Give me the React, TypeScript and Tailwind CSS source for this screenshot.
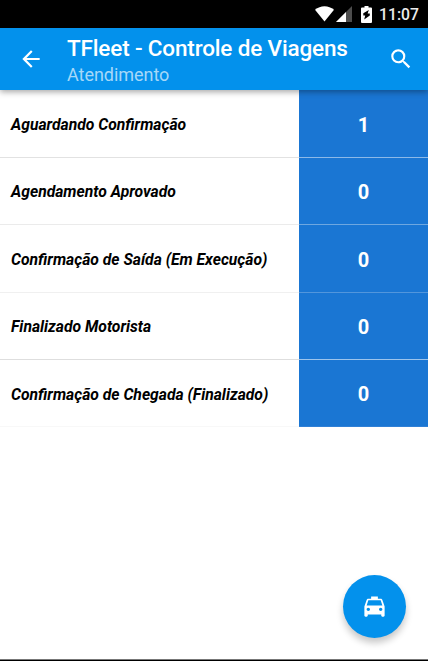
import { MdArrowBack, MdLocalTaxi, MdSearch } from "react-icons/md";

type Row = { label: string; count: number; height: string; pad: string; line: string; countLine: string };

const rows: Row[] = [
  { label: "Aguardando Confirmação", count: 1, height: "h-[68px]", pad: "pt-[3px]", line: "border-[#e2e2e2]", countLine: "border-[#8cb9e8]" },
  { label: "Agendamento Aprovado", count: 0, height: "h-[67px]", pad: "pt-[2px]", line: "border-[#ebebeb]", countLine: "border-[#6ea7e0]" },
  { label: "Confirmação de Saída (Em Execução)", count: 0, height: "h-[68px]", pad: "pt-[3px]", line: "border-[#f0f0f0]", countLine: "border-[#5296dc]" },
  { label: "Finalizado Motorista", count: 0, height: "h-[67px]", pad: "pt-[2px]", line: "border-[#dedede]", countLine: "border-[#9dc4ec]" },
  { label: "Confirmação de Chegada (Finalizado)", count: 0, height: "h-[67px]", pad: "pt-[3px]", line: "border-[#f8f8f8]", countLine: "border-[#3080d6]" },
];

function StatusBar() {
  return (
    <div className="flex h-7 shrink-0 items-center bg-black pr-[9px] pl-[315px] text-white">
      <svg className="h-[16px] w-[19px] shrink-0" viewBox="0 0 19 16">
        <path d="M0 3.8C5.4-1.1 13.6-1.1 19 3.8L9.5 15.6Z" fill="#fff" />
      </svg>
      <svg className="ml-[2px] h-[16px] w-4 shrink-0" viewBox="0 0 16 16">
        <path d="M16 0V16H0Z" fill="#4d4d4d" />
        <path d="M10 6V16H0Z" fill="#fff" />
      </svg>
      <svg className="ml-[9px] h-[17px] w-[11px] shrink-0" viewBox="0 0 11 17">
        <path d="M3.5 0H7.5V1.6H10Q11 1.6 11 2.6V16Q11 17 10 17H1Q0 17 0 16V2.6Q0 1.6 1 1.6H3.5Z" fill="#fff" />
        <path d="M7.8 4L2.3 7.2V9.6H4.2L3.2 13.6L8.8 9.6V7.5H6.6Z" fill="#000" />
      </svg>
      <span className="ml-auto pt-[2px] text-[15.75px] leading-none font-medium text-[#ececec]">11:07</span>
    </div>
  );
}

export default function App() {
  return (
    <div className="relative flex h-[661px] w-[428px] flex-col overflow-hidden bg-white font-[Roboto,sans-serif]">
      <StatusBar />
      <header className="relative z-10 flex h-[62px] shrink-0 items-center bg-[#0391ec] pr-[14px] pl-[18px] text-white shadow-[0_2px_6px_rgba(0,0,0,0.35)]">
        <MdArrowBack className="size-[26px] shrink-0" />
        <div className="ml-[23px] flex-1">
          <h1 className="pt-1 text-[22.5px] leading-[27px] font-medium tracking-[-0.16px] whitespace-nowrap">TFleet - Controle de Viagens</h1>
          <p className="text-[18px] leading-[26px] tracking-[-0.04px] text-[#a6d8f8]">Atendimento</p>
        </div>
        <MdSearch className="size-[26px] shrink-0" />
      </header>
      <main>
        {rows.map((row) => (
          <div key={row.label} className={`flex ${row.height}`}>
            <div className={`flex w-[299px] items-center border-b pl-[11px] text-[15.7px] font-bold whitespace-nowrap text-black italic ${row.pad} ${row.line}`}>
              {row.label}
            </div>
            <div className={`flex flex-1 items-center justify-center border-b bg-[#1a76d3] pt-[2px] text-[20px] font-bold text-white ${row.countLine}`}>
              {row.count}
            </div>
          </div>
        ))}
      </main>
      <button className="absolute top-[575px] left-[343px] flex size-[63px] items-center justify-center rounded-full bg-[#0391ec] pb-px text-white shadow-[0_5px_7px_rgba(0,0,0,0.22)]">
        <MdLocalTaxi className="size-[27px]" />
      </button>
      <div className="mt-auto h-[2px] border-t border-[#777] bg-black" />
    </div>
  );
}
